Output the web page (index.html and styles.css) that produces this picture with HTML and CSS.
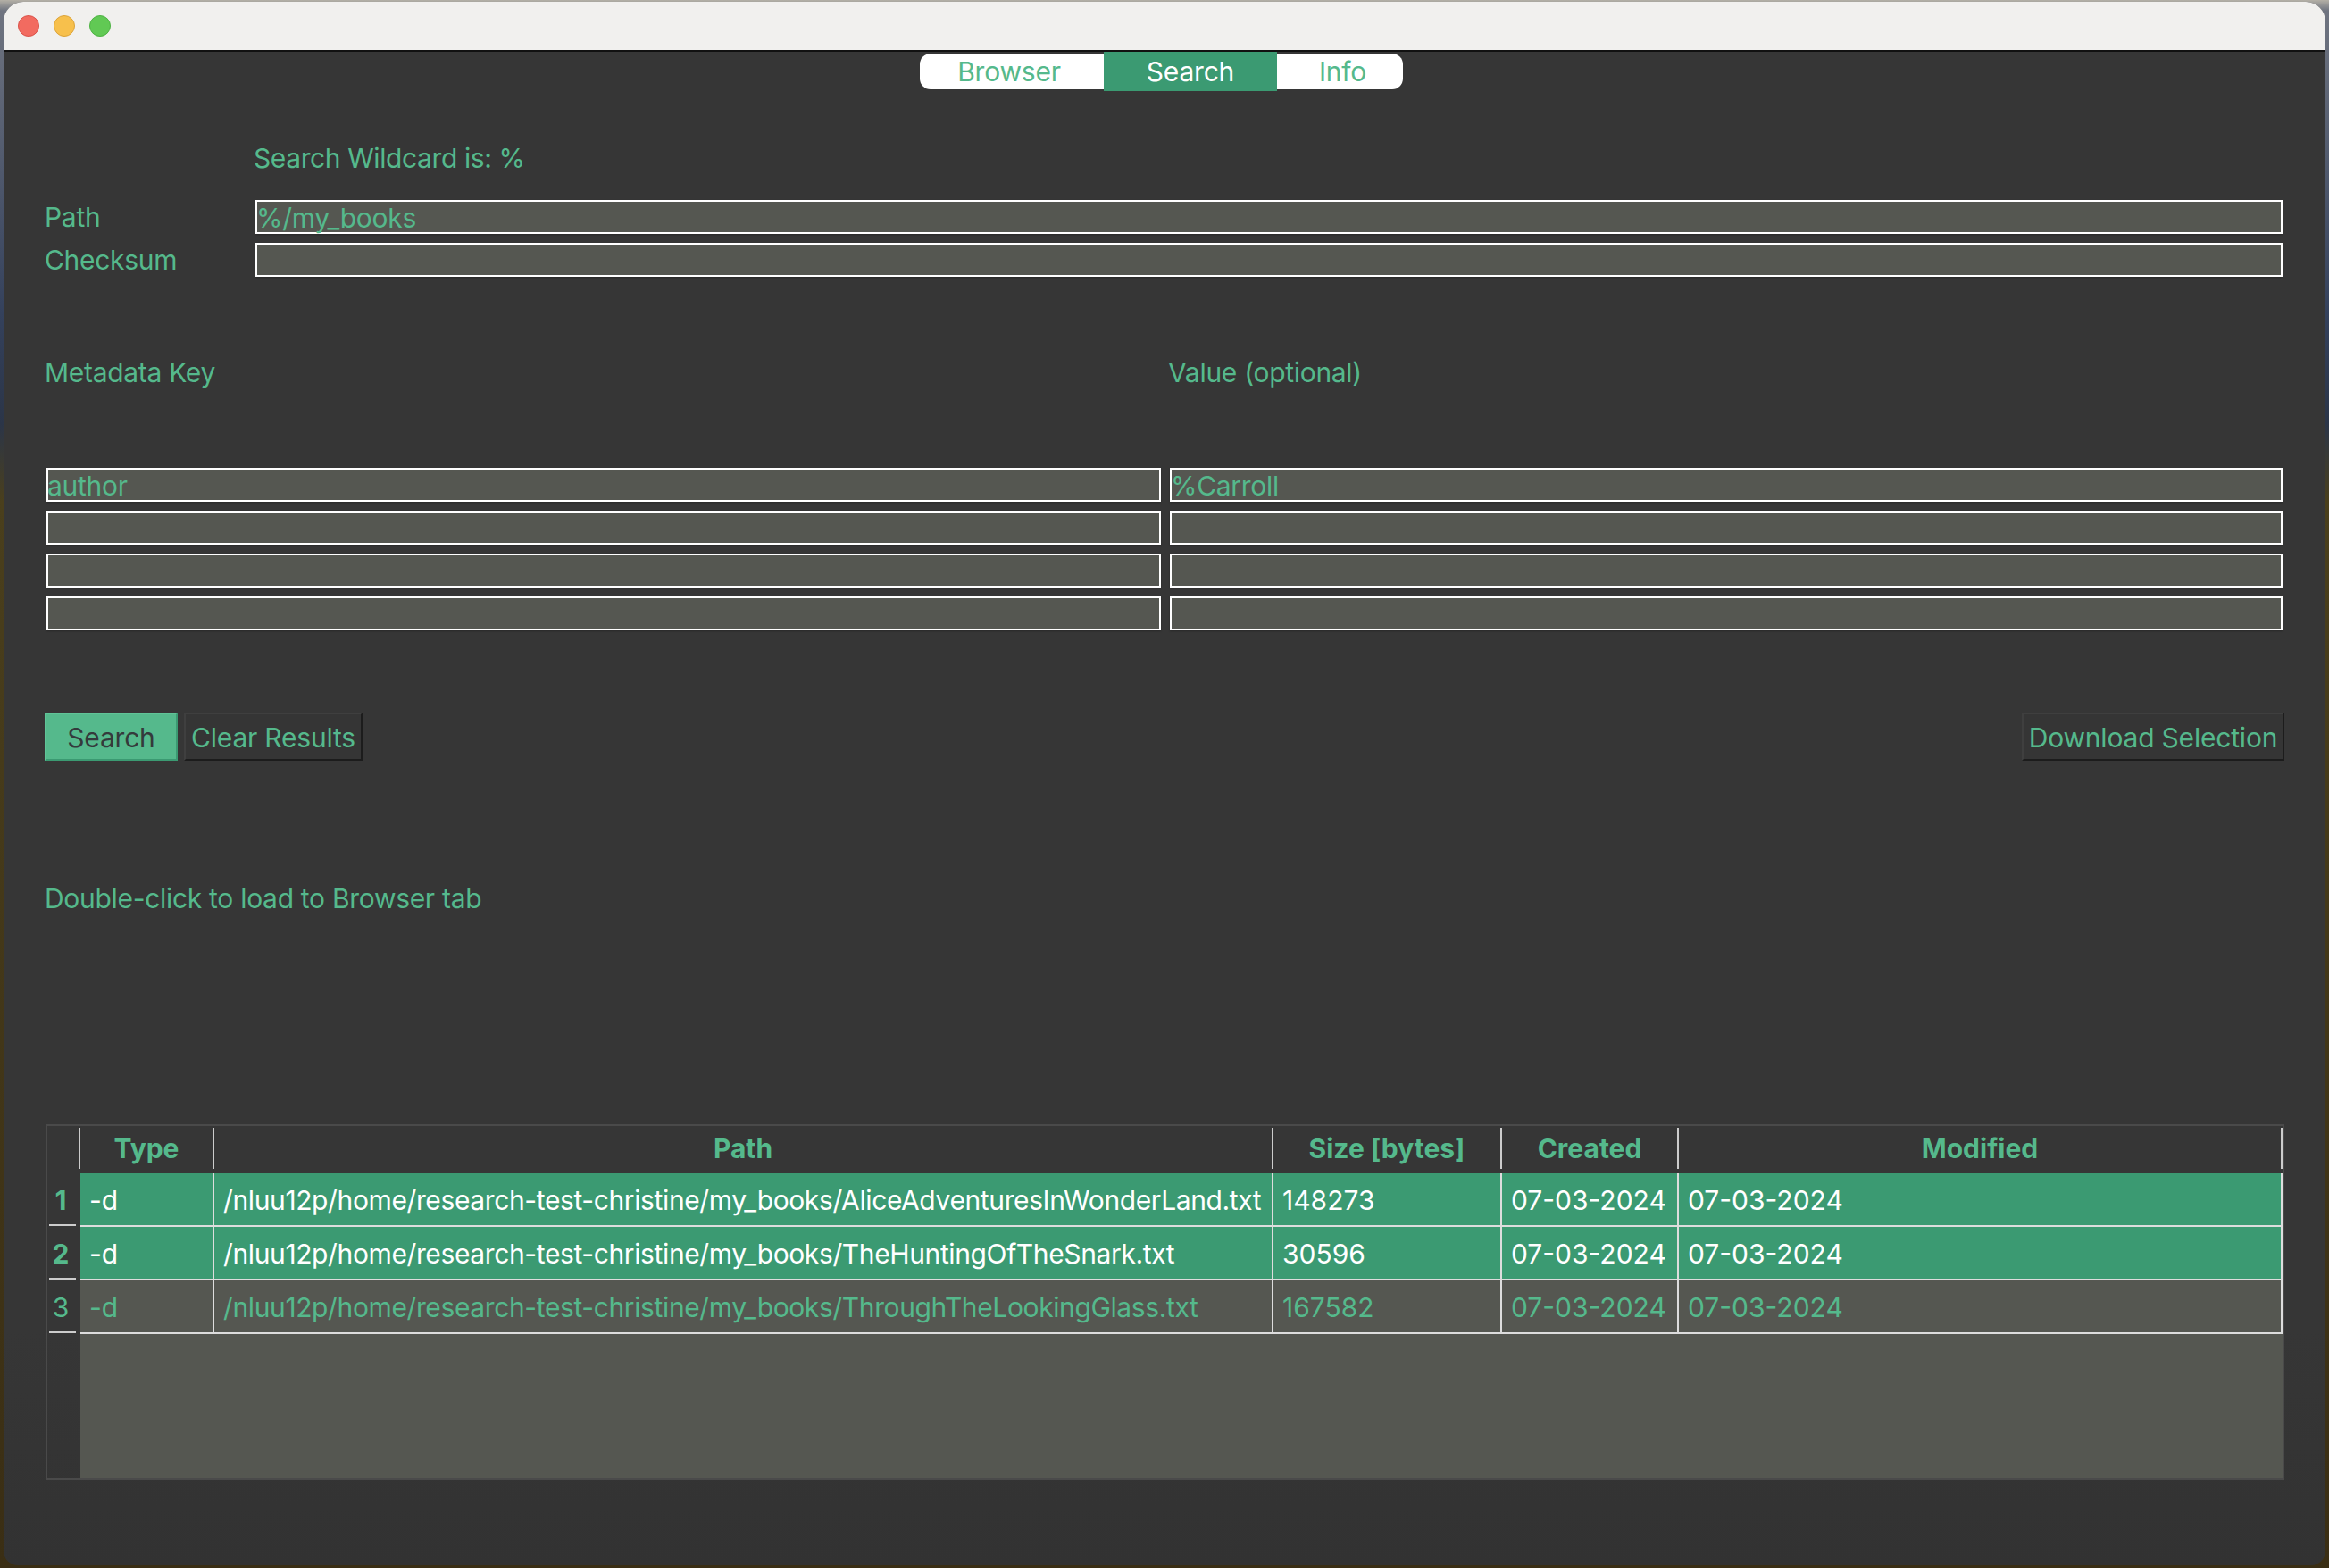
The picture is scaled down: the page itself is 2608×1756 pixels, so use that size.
FILE: index.html
```html
<!DOCTYPE html>
<html lang="en">
<head>
    <meta charset="UTF-8">
    <title>Search</title>
    <link rel="stylesheet" href="styles.css">
</head>
<body>
    <div class="window">
        <!-- Title bar -->
        <div class="titlebar">
            <span class="light red"></span>
            <span class="light yellow"></span>
            <span class="light green"></span>
        </div>

        <!-- Tabs -->
        <div class="tabs">
            <div class="tab tab-browser">Browser</div>
            <div class="tab tab-search">Search</div>
            <div class="tab tab-info">Info</div>
        </div>

        <div class="content">
            <!-- Path and checksum -->
            <div class="wildcard">Search Wildcard is: %</div>
            <div class="path-form">
                <div class="label">Path</div>
                <div class="field">%/my_books</div>
                <div class="label">Checksum</div>
                <div class="field"></div>
            </div>

            <!-- Metadata -->
            <div class="meta-heads">
                <div class="label">Metadata Key</div>
                <div class="label">Value (optional)</div>
            </div>
            <div class="meta-form">
                <div class="field">author</div>
                <div class="field">%Carroll</div>
                <div class="field"></div>
                <div class="field"></div>
                <div class="field"></div>
                <div class="field"></div>
                <div class="field"></div>
                <div class="field"></div>
            </div>

            <!-- Buttons -->
            <div class="actions">
                <button class="btn btn-primary">Search</button>
                <button class="btn btn-clear">Clear Results</button>
                <button class="btn btn-download">Download Selection</button>
            </div>

            <div class="label hint">Double-click to load to Browser tab</div>

            <!-- Results -->
            <div class="results">
                <div class="row head-row">
                    <div class="th"></div>
                    <div class="th">Type</div>
                    <div class="th">Path</div>
                    <div class="th">Size [bytes]</div>
                    <div class="th">Created</div>
                    <div class="th">Modified</div>
                </div>
                <div class="row selected">
                    <div class="row-num">1</div>
                    <div class="td">-d</div>
                    <div class="td td-path">/nluu12p/home/research-test-christine/my_books/AliceAdventuresInWonderLand.txt</div>
                    <div class="td">148273</div>
                    <div class="td">07-03-2024</div>
                    <div class="td">07-03-2024</div>
                </div>
                <div class="row selected">
                    <div class="row-num">2</div>
                    <div class="td">-d</div>
                    <div class="td td-path">/nluu12p/home/research-test-christine/my_books/TheHuntingOfTheSnark.txt</div>
                    <div class="td">30596</div>
                    <div class="td">07-03-2024</div>
                    <div class="td">07-03-2024</div>
                </div>
                <div class="row">
                    <div class="row-num">3</div>
                    <div class="td">-d</div>
                    <div class="td td-path">/nluu12p/home/research-test-christine/my_books/ThroughTheLookingGlass.txt</div>
                    <div class="td">167582</div>
                    <div class="td">07-03-2024</div>
                    <div class="td">07-03-2024</div>
                </div>
                <div class="empty"></div>
            </div>
        </div>
    </div>
</body>
</html>
```

FILE: styles.css
```css
/* Page */
body {
    margin: 0;
    height: 1756px;
    overflow: hidden;
    padding: 2px 4px 0;
    box-sizing: border-box;
    background: linear-gradient(180deg, #b4b0a6 0, #6f7480 12px, #34415c 20%, #2b3548 27%, #4a3f1c 32%, #3a2e14 100%);
    font-family: Inter, "Liberation Sans", sans-serif;
    font-size: 30px;
    color: #55b98c;
}

/* Window */
.window {
    width: 2600px;
    height: 1751px;
    display: flex;
    flex-direction: column;
    background: linear-gradient(180deg, #363636 85%, #323232 100%);
    border-radius: 22px 22px 16px 16px;
    overflow: hidden;
}

.titlebar {
    height: 56px;
    flex: none;
    display: flex;
    align-items: center;
    gap: 16px;
    padding-left: 16px;
    box-sizing: border-box;
    background-color: #f1f0ee;
    border-bottom: 2px solid #111;
}

.light {
    width: 24px;
    height: 24px;
    border-radius: 50%;
    box-sizing: border-box;
}

.red { background-color: #f26b60; border: 1px solid #d9534a; }
.yellow { background-color: #f7c04c; border: 1px solid #dba33a; }
.green { background-color: #61c954; border: 1px solid #4fb244; }

/* Tabs */
.tabs {
    display: flex;
    align-self: flex-start;
    margin: 2px 0 0 1026px;
    height: 40px;
    background-color: white;
    border-radius: 12px;
}

.tab {
    display: flex;
    align-items: center;
    justify-content: center;
    box-sizing: border-box;
    letter-spacing: -0.2px;
}

.tab-browser {
    width: 206px;
    padding-right: 6px;
}

.tab-info {
    width: 141px;
    padding-left: 6px;
}

.tab-search {
    width: 194px;
    height: 44px;
    margin-top: -2px;
    background-color: #3b9a72;
    color: white;
}

/* Form */
.content {
    padding: 0 48px 0 46px;
}

.label, .wildcard {
    line-height: 38px;
    height: 38px;
    letter-spacing: -0.3px;
}

.wildcard {
    margin: 58px 0 28px 234px;
    letter-spacing: -0.4px;
}

.path-form {
    display: grid;
    grid-template-columns: 236px 1fr;
    row-gap: 10px;
}

.field {
    height: 38px;
    line-height: 36px;
    text-indent: -1px;
    box-sizing: border-box;
    letter-spacing: -0.3px;
    background-color: #555751;
    border: 2px solid white;
    box-shadow: 0 1px 2px rgba(0, 0, 0, 0.25);
}

.meta-heads {
    display: grid;
    grid-template-columns: 1258px 1fr;
    margin-top: 88px;
}

.meta-form {
    display: grid;
    grid-template-columns: 1248px 1fr;
    gap: 10px;
    margin: 88px 0 0 2px;
}

/* Buttons */
.actions {
    display: flex;
    gap: 7px;
    margin-top: 92px;
}

.btn {
    height: 54px;
    padding: 1px 0 0;
    font: inherit;
    letter-spacing: -0.2px;
    color: #55b98c;
    background-color: #353535;
    border: 2px solid;
    border-color: #3f3f3f #1c1c1c #1c1c1c #3f3f3f;
}

.btn-primary {
    width: 149px;
    color: #343a3c;
    background-color: #55b98c;
    border-color: #60c498 #3b9a72 #3b9a72 #60c498;
}

.btn-clear { width: 200px; }

.btn-download {
    width: 294px;
    margin: 0 -2px 0 auto;
}

.hint {
    margin-top: 135px;
}

/* Results table */
.results {
    display: flex;
    flex-direction: column;
    height: 398px;
    margin: 234px -2px 0 1px;
    box-sizing: border-box;
    border: 2px solid #4a4a4a;
}

.row {
    display: grid;
    grid-template-columns: 37px 150px 1186px 256px 198px 1fr;
}

.head-row {
    height: 53px;
    padding-top: 2px;
    box-sizing: border-box;
}

.th {
    height: 46px;
    line-height: 46px;
    text-align: center;
    font-weight: 700;
    border-right: 2px solid #cccccc;
    box-sizing: border-box;
}

.td {
    height: 60px;
    line-height: 58px;
    padding-top: 1px;
    padding-left: 10px;
    box-sizing: border-box;
    white-space: nowrap;
    background-color: #555751;
    border-right: 2px solid #dddddd;
    border-bottom: 2px solid #dddddd;
}

.td-path {
    letter-spacing: -0.38px;
}

.selected .td {
    background-color: #3b9a72;
    color: white;
}

.row-num {
    position: relative;
    height: 60px;
    line-height: 60px;
    padding-right: 7px;
    text-align: center;
}

.selected .row-num {
    font-weight: 700;
}

/* short rule under each row number */
.row-num::after {
    content: "";
    position: absolute;
    left: 2px;
    right: 5px;
    bottom: 1px;
    height: 2px;
    background-color: #cccccc;
}

.empty {
    flex: 1;
    margin-left: 37px;
    background-color: #555751;
}
```
